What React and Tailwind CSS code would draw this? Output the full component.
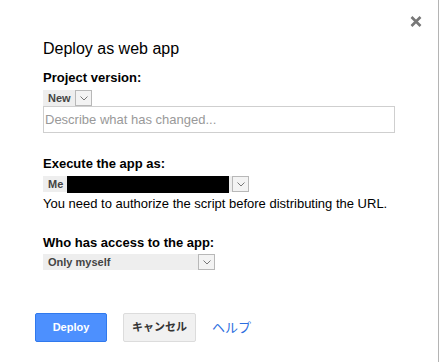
import React from "react";

function Chevron() {
  return (
    <svg width="8" height="5" viewBox="0 0 8 5" className="block">
      <path d="M0.5 0.5 L4 4 L7.5 0.5" fill="none" stroke="#777" strokeWidth="1" />
    </svg>
  );
}

function ArrowBox() {
  return (
    <div className="flex h-[16px] w-[17px] items-center justify-center border border-[#b8b8b8] bg-[#f3f3f3]">
      <Chevron />
    </div>
  );
}

export default function App() {
  return (
    <div
      className="relative h-[362px] w-[439px] border-r border-[#b4b4b4] bg-white text-[#222]"
      style={{ fontFamily: '"Liberation Sans", Arial, "Noto Sans CJK JP", sans-serif' }}
    >
      <div className="absolute left-[410px] top-[16px]">
        <svg width="12" height="11" viewBox="0 0 12 11">
          <path d="M1.5 1 L10.5 10 M10.5 1 L1.5 10" stroke="#777" strokeWidth="2.6" strokeLinecap="butt" />
        </svg>
      </div>

      <div className="flex flex-col pl-[43px] pt-[39px]">
        <div className="text-[16px] leading-[20px] text-black">Deploy as web app</div>

        <div className="mt-[11px] text-[13px] font-bold leading-[16px] text-black">Project version:</div>
        <div className="mt-[4px] flex h-[16px] w-[49px] items-stretch">
          <div className="flex flex-1 items-center bg-[#eeeeee] pl-[5px] text-[11px] font-bold leading-[16px] text-[#444]">
            New
          </div>
          <ArrowBox />
        </div>
        <div className="flex h-[27px] w-[352px] items-center border border-[#cfcfcf] pl-[1px] text-[13px] text-[#999]">
          Describe what has changed...
        </div>

        <div className="mt-[23px] text-[13px] font-bold leading-[16px] text-black">Execute the app as:</div>
        <div className="mt-[4px] flex h-[16px] w-[206px] items-stretch">
          <div className="relative flex flex-1 items-center bg-[#eeeeee] pl-[5px] text-[11px] font-bold leading-[16px] text-[#444]">
            Me
            <div className="absolute left-[24px] top-0 h-[17px] w-[162px] bg-black" />
          </div>
          <ArrowBox />
        </div>
        <div className="mt-[4px] text-[13px] leading-[16px] text-black">
          You need to authorize the script before distributing the URL.
        </div>

        <div className="mt-[23px] text-[13px] font-bold leading-[16px] text-black">Who has access to the app:</div>
        <div className="mt-[3px] flex h-[16px] w-[172px] items-stretch">
          <div className="flex flex-1 items-center bg-[#eeeeee] pl-[5px] text-[11px] font-bold leading-[16px] text-[#444]">
            Only myself
          </div>
          <ArrowBox />
        </div>

        <div className="-ml-[8px] mt-[43px] flex items-center">
          <div className="flex h-[29px] w-[72px] items-center justify-center rounded-[2px] border border-[#3079ed] bg-[#4d90fe] text-[11px] font-bold text-white">
            Deploy
          </div>
          <div className="ml-[16px] flex h-[29px] w-[73px] items-center justify-center rounded-[2px] border border-[#dcdcdc] bg-[#f1f1f1] text-[11px] font-bold text-[#333]">
            キャンセル
          </div>
          <div className="ml-[16px] text-[13px] text-[#2c6ee0]">ヘルプ</div>
        </div>
      </div>
    </div>
  );
}
